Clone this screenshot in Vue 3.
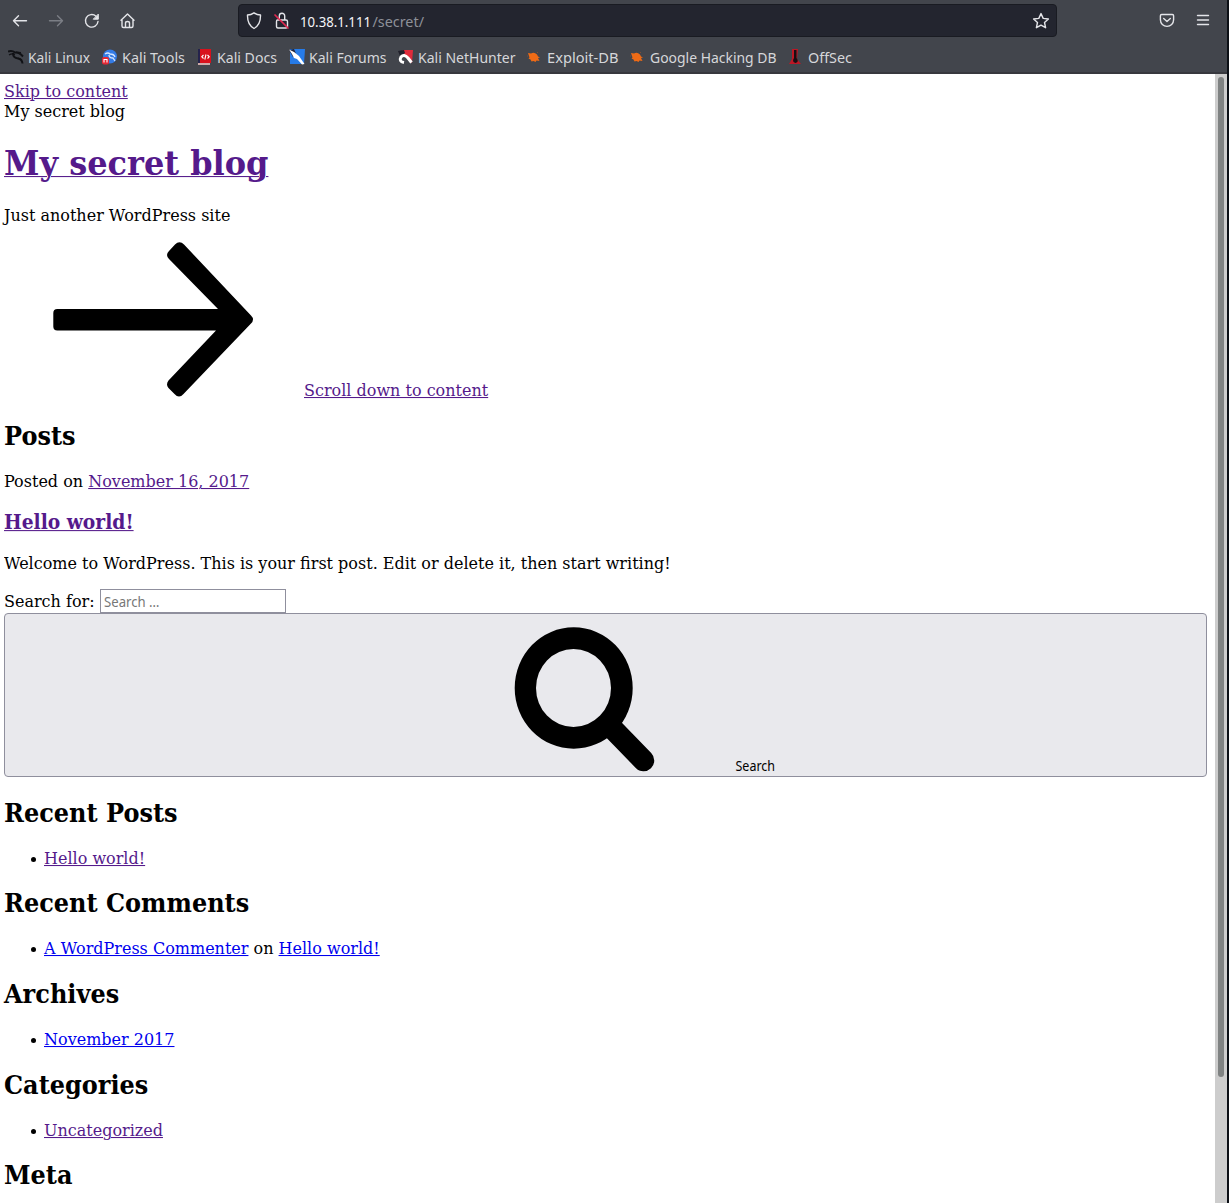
<script setup>
const bookmarks = [
  { id: 'linux', label: 'Kali Linux', width: 94, text: 62 },
  { id: 'tools', label: 'Kali Tools', width: 95, text: 63 },
  { id: 'docs', label: 'Kali Docs', width: 92, text: 60 },
  { id: 'forums', label: 'Kali Forums', width: 109, text: 77.5 },
  { id: 'hunter', label: 'Kali NetHunter', width: 129, text: 97.5 },
  { id: 'bug', label: 'Exploit-DB', width: 103, text: 71.5 },
  { id: 'bug', label: 'Google Hacking DB', width: 158, text: 126.5 },
  { id: 'offsec', label: 'OffSec', width: 70, text: 44 },
]
const widgets = [
  { title: 'Recent Posts', links: [{ text: 'Hello world!', seen: true }] },
  { title: 'Recent Comments', links: [{ text: 'A WordPress Commenter' }, { text: 'Hello world!' }] },
  { title: 'Archives', links: [{ text: 'November 2017' }] },
  { title: 'Categories', links: [{ text: 'Uncategorized', seen: true }] },
]
</script>

<template>
  <div class="window">
    <header class="chrome">
      <div class="toolbar">
        <svg class="nav" width="150" height="40" viewBox="0 0 150 40" fill="none" stroke="#e4e5e9" stroke-width="1.4" stroke-linecap="round" stroke-linejoin="round">
          <path d="M26.500 20.700H13.500M18.500 15.700l-5 5 5 5" />
          <path stroke="#7b7e85" d="M49.500 20.700h13M57.500 15.700l5 5-5 5" />
          <path d="M98 21.500a6.300 6.300 0 1 1-2-5.300" />
          <path fill="#e4e5e9" stroke-width="1" d="M98.300 14.500v4.700h-4.700z" />
          <path d="M121 20.200l6.500-6.200 6.500 6.200M122 19.500v6.500q0 1.500 1.500 1.500h8q1.500 0 1.500-1.500v-6.500M125.500 27v-4q0-1.500 2-1.500t2 1.500v4" />
        </svg>
        <div class="urlbar">
          <svg class="guard" width="54" height="32" viewBox="0 0 54 32" fill="none" stroke="#e4e5e9" stroke-width="1.400" stroke-linecap="round" stroke-linejoin="round">
            <path d="M15 7.800q-3 2-6.500 2.200c-.2 6.500 1.400 10.700 6.500 13.500 5.100-2.800 6.700-7 6.500-13.500Q18 9.800 15 7.800z" />
            <path d="M38.500 15h8.500q1.500 0 1.500 1.500v5q0 1.500-1.500 1.500h-8q-1.500 0-1.500-1.500v-5q0-1.500 1-1.500zM40.300 15v-4a2.700 2.700 0 0 1 5.400 0v4" />
            <path stroke="#e22850" stroke-width="1.700" d="M36 10l13 13" />
          </svg>
          <svg class="address" width="128" height="30">
            <text x="0" y="20.500" textLength="71" lengthAdjust="spacingAndGlyphs" fill="#f5f5f8">10.38.1.111</text>
            <text x="72.500" y="20.500" textLength="51.500" lengthAdjust="spacingAndGlyphs" fill="#8d9098">/secret/</text>
          </svg>
          <svg class="star" width="18" height="18" viewBox="0 0 18 18" fill="none" stroke="#e4e5e9" stroke-width="1.400" stroke-linejoin="round"><path d="M9 1.600l2.200 4.800 5.200.6-3.900 3.500 1.100 5.200L9 13.100l-4.600 2.600 1.100-5.200L1.600 7l5.200-.6z" /></svg>
        </div>
        <svg class="menu" width="60" height="24" viewBox="0 0 60 24" fill="none" stroke="#e4e5e9" stroke-width="1.400" stroke-linecap="round" stroke-linejoin="round">
          <path d="M4.700 6.500h10.600q1.300 0 1.300 1.300v4a6.600 6.600 0 0 1-13.200 0v-4q0-1.300 1.300-1.300zM6.700 10.500l3.300 3 3.300-3" />
          <path d="M40.500 7.500h11M40.500 12h11M40.500 16.500h11" />
        </svg>
      </div>
      <nav class="bookmarks">
        <a v-for="b in bookmarks" :key="b.label" class="mark" :style="{ width: b.width + 'px' }">
          <svg class="icon" width="16" height="18" viewBox="0 0 16 18">
            <g v-if="b.id === 'linux'" fill="none" stroke="#111216">
              <path stroke-width="2" d="M0 3.500q4-1.500 7 1 3.500-.5 6 2l2 2M5 5q0 5 5 5.500 4 .5 4.500 5" />
              <path stroke-width="1.200" d="M1 7q3-2 6-.5M8 4l5 .5M10 10l4 2" />
            </g>
            <g v-else-if="b.id === 'tools'">
              <circle cx="8" cy="8.500" r="7" fill="#347be5" />
              <path fill="none" stroke="#d5e6ff" stroke-width="1.300" d="M3 6q3-2 5 0 4 0 5 3M7 7q0 3 4 3l2 3" />
              <rect x="0" y="9" width="7" height="7.500" rx="2" fill="#e72835" />
              <path fill="none" stroke="#fff" stroke-width="1.100" d="M2 14.500v-3h3v3" />
            </g>
            <g v-else-if="b.id === 'docs'">
              <path fill="#25234c" d="M1 1h3v14H1z" /><path fill="#d8111c" d="M3 1h11v14H3z" /><path fill="#cfaaa9" d="M1 15h12v2H1z" />
              <path fill="none" stroke="#fff" stroke-width="1.100" d="M6.500 7L4.800 8.800l1.700 1.700M10.500 7l1.700 1.800-1.700 1.700M9 6.500l-1.200 5" />
            </g>
            <g v-else-if="b.id === 'forums'">
              <path fill="#267be8" d="M1 1h15l-1 15H1z" /><path fill="#20243b" d="M0 2l5-1 3 7-4 1z" />
              <path fill="#fff" d="M0 1.500l5 2.500 5 4 5.500 8-2.500.5-5-5.500-3-1-2-4z" />
            </g>
            <g v-else-if="b.id === 'hunter'">
              <path fill="#e02b3b" d="M4 2h11l-1 13-4-3z" /><path fill="#20202b" d="M0 3l6-1 1 3-5 3z" />
              <path fill="none" stroke="#fff" stroke-width="3" d="M13.500 14.500L10 10Q6 5.500 3 9q-2.500 4.500 3 5.500" />
            </g>
            <g v-else-if="b.id === 'bug'">
              <path fill="#ef6b16" d="M1 5l3 .5Q7 3.500 10 6.500l1 2 2 1-2 .5 1.500 3-3-.5-1 1.500-2-1-2 .5-1-2-2-1 1-1z" />
              <path fill="none" stroke="#9a522c" stroke-width=".7" d="M1 8H0M7 13l1 1M10 5l1-1" />
            </g>
            <g v-else>
              <path fill="#bd1725" d="M4 1h6l-1 10 4 5H1l3-5z" /><path fill="#170e13" d="M6 2h2.500v8q3 4-1 5-4-1-1.500-5z" />
            </g>
          </svg>
          <svg class="label" :width="b.text + 1" height="31"><text x="0" y="21" :textLength="b.text" lengthAdjust="spacingAndGlyphs">{{ b.label }}</text></svg>
        </a>
      </nav>
    </header>

    <div class="viewport">
      <main class="page">
        <div class="line"><span class="t"><a class="seen">Skip to content</a></span></div>
        <div class="line"><span class="t">My secret blog</span></div>
        <h1><span class="t"><a class="seen">My secret blog</a></span></h1>
        <p class="line tagline"><span class="t">Just another WordPress site</span></p>
        <div class="scroll">
          <svg width="300" height="156" viewBox="4 241 300 156"><path d="M53.300 313q0-4 4-4H218L169 259q-4-4 0-8l6-6.500q4.500-4.500 9 0L251 315.500q4 4 0 8L183.500 394q-4.500 5-9 0l-6-6q-3-3.500 0-7.500L216 330.500H57.300q-4 0-4-4z" /></svg>
          <div class="line"><span class="t"><a class="seen">Scroll down to content</a></span></div>
        </div>
        <h2 class="posts"><span class="t">Posts</span></h2>
        <div class="line date"><span class="t">Posted on <a class="seen">November 16, 2017</a></span></div>
        <h3><span class="t"><a class="seen">Hello world!</a></span></h3>
        <p class="line body"><span class="t">Welcome to WordPress. This is your first post. Edit or delete it, then start writing!</span></p>
        <div class="search">
          <div class="line"><span class="t">Search for:</span></div>
          <div class="field"><svg width="60" height="22"><text x="0" y="17" textLength="55.500" lengthAdjust="spacingAndGlyphs" fill="#777">Search …</text></svg></div>
        </div>
        <div class="submit">
          <svg width="300" height="156" viewBox="435 616 300 156">
            <path fill-rule="evenodd" d="M514.700 688a59 60.700 0 1 0 118 0a59 60.700 0 1 0-118 0zM536 688a37.500 39 0 1 1 75 0a37.500 39 0 1 1-75 0z" />
            <path d="M611 727l32.500 33.500" stroke="#000" stroke-width="21.500" stroke-linecap="round" />
          </svg>
          <svg class="caption" width="50" height="24"><text x="0.500" y="19" textLength="39.500" lengthAdjust="spacingAndGlyphs">Search</text></svg>
        </div>
        <section v-for="w in widgets" :key="w.title" class="widget">
          <h2><span class="t">{{ w.title }}</span></h2>
          <div class="line item">
            <i class="dot"></i>
            <span class="t"><template v-for="(l, i) in w.links" :key="i"><template v-if="i"> on </template><a :class="{ seen: l.seen }">{{ l.text }}</a></template></span>
          </div>
        </section>
        <h2><span class="t">Meta</span></h2>
      </main>
      <div class="track"><div class="thumb"></div></div>
    </div>
  </div>
</template>

<style>
body { overflow: hidden; background: #0c1016; }
</style>

<style scoped>
.window { box-sizing: border-box; width: 1229px; height: 1203px; overflow: hidden; background: #0c1016; padding-right: 2px; font-family: "DejaVu Serif", serif; color: #000; }
.chrome { box-sizing: border-box; height: 74px; background: #42454c; border-bottom: 2px solid #37383e; font-family: "Noto Sans", sans-serif; }
.toolbar { display: flex; height: 42px; }
.urlbar { box-sizing: border-box; display: flex; align-items: center; width: 819px; height: 33px; margin: 4px 0 0 88px; border: 1px solid #191b22; border-radius: 4px; background: #23252f; }
.guard { flex: none; }
.address { margin-left: 6.500px; font-size: 15px; }
.star { margin: 0 6px 0 auto; }
.menu { margin: 8px 0 0 100px; }
.bookmarks { display: flex; padding-left: 8px; height: 30px; }
.mark { display: flex; align-items: center; flex: none; white-space: nowrap; text-decoration: none; }
.icon { flex: none; margin-right: 4px; }
.label { flex: none; overflow: visible; font-size: 15px; fill: #d6d7da; }
.viewport { display: flex; height: 1129px; background: #fff; }
.page { box-sizing: border-box; width: 1215px; padding: 8px 8px 0 4px; overflow: hidden; }
.track { width: 12px; background: #cdcdcd; }
.thumb { width: 6px; height: 1000px; margin: 3px auto 0; border-radius: 3px; background: #7f8282; }
.line { margin: 0; height: 20px; font-size: 16px; line-height: 20px; white-space: nowrap; }
.t { display: inline-block; transform: scaleY(1.05); transform-origin: 0 80%; }
.page a { color: #0000ee; text-decoration: underline; text-decoration-thickness: 1px; }
.page a.seen { color: #551a8b; }
h1, h2, h3 { margin: 0; white-space: nowrap; }
h1 { margin-top: 23px; height: 38px; font-size: 32px; line-height: 38px; }
h2 { height: 28px; font-size: 24px; line-height: 28px; }
h3 { margin-top: 19px; height: 22px; font-size: 18.72px; line-height: 22px; }
.tagline { margin-top: 23px; }
.scroll { display: flex; align-items: flex-end; margin-top: 15px; height: 160px; }
.scroll svg { align-self: flex-start; }
.posts { margin-top: 22px; }
.date { margin-top: 21px; }
.body { margin-top: 21px; }
.search { display: flex; margin-top: 15px; height: 24px; }
.search .line { margin-top: 3px; width: 96px; }
.field { box-sizing: border-box; width: 186px; height: 24px; border: 1px solid #8f8f9d; padding-left: 3px; font: 13.700px/22px "Noto Sans", sans-serif; }
.field svg { display: block; }
.submit { box-sizing: border-box; display: flex; padding-left: 430px; width: 1203px; height: 164px; padding-top: 2px; border: 1px solid #8f8f9d; border-radius: 4px; background: #e9e9ed; font: 13.700px/18px "Noto Sans", sans-serif; }
.caption { align-self: flex-end; }
.widget { height: 70px; margin: 20.600px 0; }
.submit + .widget { margin-top: 22.800px; }
.item { display: flex; align-items: center; margin-top: 21px; padding-left: 26.500px; }
.dot { width: 5px; height: 5px; margin: 1px 8.500px 0 0; border-radius: 50%; background: #000; }
</style>
